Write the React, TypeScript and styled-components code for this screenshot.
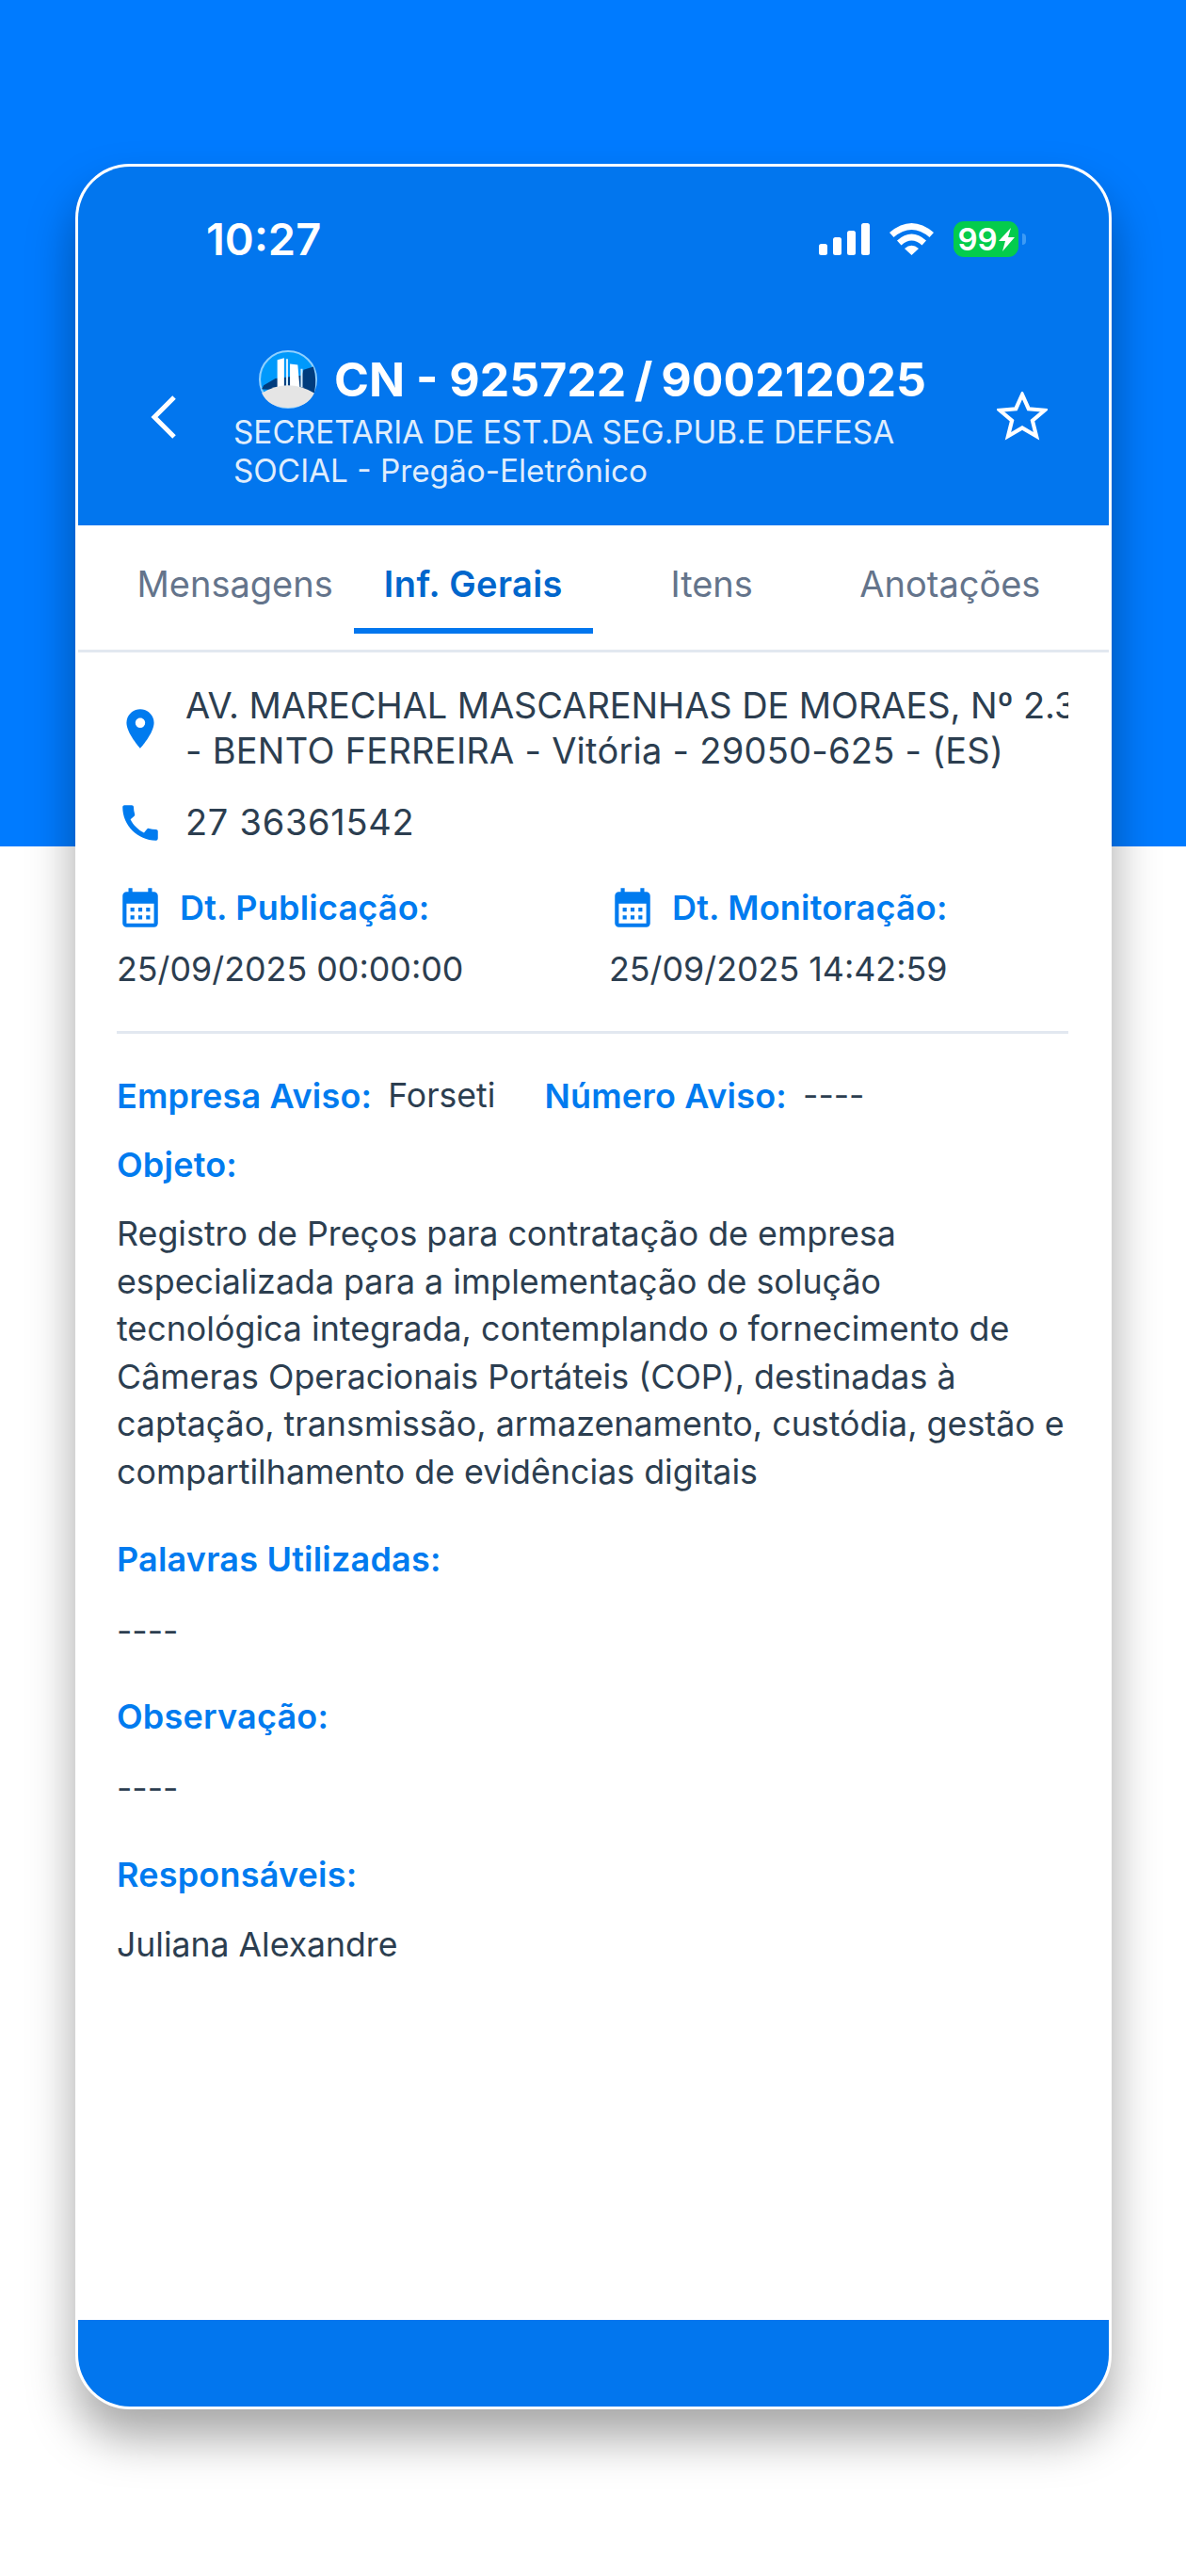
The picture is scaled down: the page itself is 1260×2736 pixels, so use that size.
import React from 'react';
import styled, { createGlobalStyle } from 'styled-components';
import { MdCalendarMonth, MdCall, MdLocationOn } from 'react-icons/md';

const blue = '#0276ee';
const link = '#007bef';
const ink = '#2c3e50';

const GlobalStyle = createGlobalStyle`
  html, body {
    margin: 0;
    height: 2736px;
    overflow: hidden;
    background: linear-gradient(#007bff 0, #007bff 899px, #ffffff 899px);
    font-family: Inter, "Noto Sans", sans-serif;
  }
`;

const tabs = ['Mensagens', 'Inf. Gerais', 'Itens', 'Anotações'];

const Logo = () => (
  <svg width="62" height="62" viewBox="0 0 60 60">
    <circle cx="30" cy="30" r="29" fill="#0099fb" stroke="#8fd0ff" strokeWidth="2" />
    <path d="M3 40 L5 36 L17 29 L44 26 L46 20 L56 17 Q60 30 57 44 Z" fill="#003c7d" />
    <path d="M19 10 L26 8 L26 38 L19 38 Z M32 14 L40 15 L42 38 L32 38 Z" fill="#ffffff" />
    <path d="M28 9 h2 v29 h-2 Z M43 19 h2 v19 h-2 Z" fill="#d7efff" />
    <path d="M3 44 Q30 28 57 44 Q50 59 30 59 Q10 59 3 44 Z" fill="#e5e5e5" />
  </svg>
);

const Signal = () => (
  <svg width="54" height="34" viewBox="0 0 54 34" fill="#ffffff">
    <rect x="0" y="22" width="9" height="12" rx="2.5" />
    <rect x="15" y="15" width="9" height="19" rx="2.5" />
    <rect x="30" y="8" width="9" height="26" rx="2.5" />
    <rect x="45" y="0" width="9" height="34" rx="2.5" />
  </svg>
);

const Wifi = () => (
  <svg width="47" height="34" viewBox="0 0 47 34" fill="#ffffff">
    <path d="M0 10 Q23.500 -10 47 10 L42.500 15 Q23.500 -1 4.500 15 Z" />
    <path d="M8 18.500 Q23.500 4.500 39 18.500 L34.500 23.500 Q23.500 13.500 12.500 23.500 Z" />
    <path d="M16 27 Q23.500 20.500 31 27 L23.500 34 Z" />
  </svg>
);

const Bolt = () => (
  <svg width="17" height="25" viewBox="0 0 17 25" fill="#ffffff">
    <path d="M13 0 L0 14 L7 14 L4 25 L17 10 L10 10 Z" />
  </svg>
);

const Chevron = () => (
  <svg width="27" height="46" viewBox="0 0 27 46" fill="none">
    <path d="M25 2 L4 23 L25 44" stroke="#ffffff" strokeWidth="5" />
  </svg>
);

const StarOutline = () => (
  <svg width="54" height="52" viewBox="1 2 52 50" fill="none">
    <path
      d="M27 5 L33.500 19.500 L50 21 L37.500 31.500 L41.500 47.500 L27 39 L12.500 47.500 L16.500 31.500 L4 21 L20.500 19.500 Z"
      stroke="#ffffff"
      strokeWidth="4"
    />
  </svg>
);

const App: React.FC = () => {
  return (
    <>
      <GlobalStyle />
      <Phone>
        <Header>
          <StatusBar>
            <Time>10:27</Time>
            <StatusIcons>
              <Signal />
              <Wifi />
              <Battery>
                99
                <Bolt />
              </Battery>
            </StatusIcons>
          </StatusBar>
          <TitleBar>
            <BackButton>
              <Chevron />
            </BackButton>
            <TitleBlock>
              <TitleRow>
                <Logo />
                <Title>
                  CN - <Numbers>925722 / 900212025</Numbers>
                </Title>
              </TitleRow>
              <Subtitle>SECRETARIA DE EST.DA SEG.PUB.E DEFESA SOCIAL - Pregão-Eletrônico</Subtitle>
            </TitleBlock>
            <StarButton>
              <StarOutline />
            </StarButton>
          </TitleBar>
        </Header>

        <TabBar>
          {tabs.map(tab => (
            <Tab key={tab} $active={tab === 'Inf. Gerais'}>
              {tab}
            </Tab>
          ))}
        </TabBar>

        <Content>
          <AddressRow>
            <IconSlot>
              <MdLocationOn size={50} />
            </IconSlot>
            <AddressText>
              <AddressLine $tracking={-0.1}>AV. MARECHAL MASCARENHAS DE MORAES, Nº 2.341</AddressLine>
              <AddressLine $tracking={0.25}>- BENTO FERREIRA - Vitória - 29050-625 - (ES)</AddressLine>
            </AddressText>
          </AddressRow>
          <PhoneRow>
            <IconSlot>
              <MdCall size={50} />
            </IconSlot>
            <PhoneText>27 36361542</PhoneText>
          </PhoneRow>

          <DatesGrid>
            <div>
              <DateLabel>
                <IconSlot>
                  <MdCalendarMonth size={50} />
                </IconSlot>
                Dt. Publicação:
              </DateLabel>
              <DateValue>25/09/2025 00:00:00</DateValue>
            </div>
            <div>
              <DateLabel>
                <IconSlot>
                  <MdCalendarMonth size={50} />
                </IconSlot>
                Dt. Monitoração:
              </DateLabel>
              <DateValue>25/09/2025 14:42:59</DateValue>
            </div>
          </DatesGrid>

          <Divider />

          <NoticeRow>
            <Label>Empresa Aviso:</Label>
            <Value>Forseti</Value>
            <Label $gap={35}>Número Aviso:</Label>
            <Value>----</Value>
          </NoticeRow>

          <Label $top={29}>Objeto:</Label>
          <Description>
            Registro de Preços para contratação de empresa especializada para a implementação de solução
            tecnológica integrada, contemplando o fornecimento de Câmeras Operacionais Portáteis (COP), destinadas à
            captação, transmissão, armazenamento, custódia, gestão e compartilhamento de evidências digitais
          </Description>

          <Label $top={45}>Palavras Utilizadas:</Label>
          <Value $top={33}>----</Value>

          <Label $top={46}>Observação:</Label>
          <Value $top={33}>----</Value>

          <Label $top={47}>Responsáveis:</Label>
          <Value $top={31}>Juliana Alexandre</Value>
        </Content>

        <Footer />
      </Phone>
    </>
  );
};

const Phone = styled.div`
  width: 1101px;
  height: 2385px;
  margin: 174px 0 0 80px;
  box-sizing: border-box;
  display: flex;
  flex-direction: column;
  overflow: hidden;
  background: #ffffff;
  border: 3px solid #ffffff;
  border-radius: 58px;
  box-shadow: 0 30px 50px rgba(0, 0, 0, 0.35);
`;

const Header = styled.header`
  height: 381px;
  flex: none;
  display: flex;
  flex-direction: column;
  background: ${blue};
  color: #ffffff;
`;

const StatusBar = styled.div`
  display: flex;
  align-items: center;
  justify-content: space-between;
  height: 38px;
  margin-top: 58px;
  padding: 0 96px 0 136px;
`;

const Time = styled.span`
  font-size: 47px;
  font-weight: 600;
  line-height: 38px;
`;

const StatusIcons = styled.div`
  display: flex;
  align-items: center;
  gap: 21px;
`;

const Battery = styled.div`
  position: relative;
  width: 69px;
  height: 38px;
  display: flex;
  align-items: center;
  justify-content: center;
  gap: 1px;
  border-radius: 11px;
  background: #04cc4c;
  font-size: 33px;
  font-weight: 600;
  color: #ffffff;

  &::after {
    content: '';
    position: absolute;
    right: -8px;
    top: 13px;
    width: 4px;
    height: 12px;
    border-radius: 0 6px 6px 0;
    background: #3d9bf5;
  }
`;

const TitleBar = styled.div`
  display: flex;
  align-items: center;
  margin-top: 100px;
  padding: 0 65px 0 77px;
`;

const BackButton = styled.div`
  width: 88px;
  flex: none;
  margin-bottom: 5px;
`;

const StarButton = styled.div`
  margin-left: auto;
  margin-bottom: 6px;
`;

const TitleBlock = styled.div`
  width: 759px;
`;

const TitleRow = styled.div`
  display: flex;
  align-items: center;
  justify-content: center;
  gap: 18px;
  height: 60px;
  padding-left: 4px;
`;

const Title = styled.h1`
  margin: 0;
  font-size: 50px;
  font-weight: 700;
  line-height: 60px;
  white-space: nowrap;
`;

const Numbers = styled.span`
  word-spacing: -3px;
`;

const Subtitle = styled.div`
  margin-top: 6px;
  font-size: 33.3px;
  line-height: 41px;
  color: rgba(255, 255, 255, 0.88);
`;

const TabBar = styled.nav`
  height: 135px;
  flex: none;
  box-sizing: border-box;
  display: flex;
  padding: 0 42px 0 40px;
  border-bottom: 3px solid #e2e8f0;
`;

const Tab = styled.div<{ $active?: boolean }>`
  flex: 1;
  height: 115px;
  box-sizing: border-box;
  display: flex;
  align-items: center;
  justify-content: center;
  padding-top: 14px;
  font-size: 38px;
  font-weight: ${p => (p.$active ? 600 : 400)};
  letter-spacing: ${p => (p.$active ? 0.4 : 0)}px;
  color: ${p => (p.$active ? '#0066cc' : '#64748b')};
  border-bottom: 6px solid ${p => (p.$active ? blue : 'transparent')};
`;

const Content = styled.main`
  flex: 1;
  padding: 33px 43px 0 41px;
  color: ${ink};
  font-size: 36px;
`;

const AddressRow = styled.div`
  display: flex;
  align-items: center;
  gap: 23px;
  overflow: hidden;
`;

const PhoneRow = styled(AddressRow)`
  margin-top: 28px;
`;

const IconSlot = styled.span`
  flex: none;
  display: block;
  width: 50px;
  height: 50px;
  color: ${link};
  line-height: 0;
`;

const AddressText = styled.div`
  font-size: 38px;
  line-height: 47.5px;
  min-width: 0;
`;

const AddressLine = styled.div<{ $tracking: number }>`
  white-space: nowrap;
  letter-spacing: ${p => p.$tracking}px;
`;

const PhoneText = styled(AddressText)`
  letter-spacing: 0.7px;
`;

const DatesGrid = styled.div`
  display: grid;
  grid-template-columns: 523px 1fr;
  margin-top: 40px;
`;

const DateLabel = styled.div`
  display: flex;
  align-items: center;
  gap: 17px;
  height: 50px;
  font-size: 36px;
  font-weight: 600;
  letter-spacing: 0.2px;
  color: ${link};
`;

const DateValue = styled.div`
  margin-top: 18px;
  font-size: 35.8px;
  line-height: 44px;
`;

const Divider = styled.hr`
  height: 3px;
  margin: 44px 0 44px;
  border: 0;
  background: #e2e8f0;
`;

const NoticeRow = styled.div`
  display: flex;
  gap: 17px;
`;

const Label = styled.div<{ $top?: number; $gap?: number }>`
  margin-top: ${p => p.$top ?? 0}px;
  margin-left: ${p => p.$gap ?? 0}px;
  font-size: 36px;
  font-weight: 600;
  line-height: 44px;
  letter-spacing: 0.2px;
  color: ${link};
`;

const Value = styled.div<{ $top?: number }>`
  margin-top: ${p => p.$top ?? 0}px;
  font-size: 35.6px;
  line-height: 44px;
`;

const Description = styled.p`
  margin: 26px 0 0;
  font-size: 35.8px;
  line-height: 50.600px;
`;

const Footer = styled.footer`
  height: 92px;
  flex: none;
  background: ${blue};
`;

export default App;
